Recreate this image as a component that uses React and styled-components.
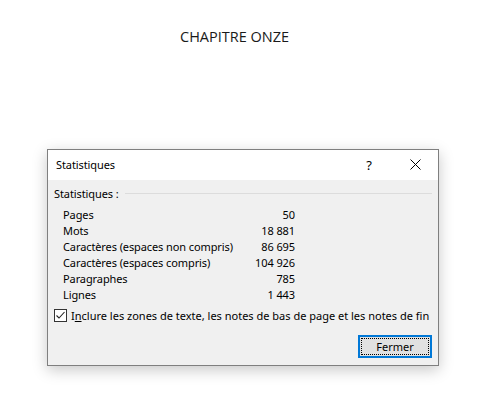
import React from "react";
import styled, { createGlobalStyle } from "styled-components";

const Global = createGlobalStyle`
  html, body { margin: 0; padding: 0; background: #ffffff; }
  body { font-family: "Noto Sans", "Open Sans", sans-serif; }
`;

const Page = styled.div`
  width: 487px;
  height: 404px;
  display: flex;
  flex-direction: column;
  padding-top: 28px;
  box-sizing: border-box;
`;

const Heading = styled.h1`
  margin: 0 0 0 180px;
  font-family: "Open Sans", "Noto Sans", sans-serif;
  font-weight: 400;
  font-size: 14.5px;
  line-height: 18px;
  color: #1a1a1a;
`;

const Dialog = styled.div`
  margin: 103px 0 0 47px;
  width: 392px;
  height: 217px;
  box-sizing: border-box;
  border: 1px solid #7f7f7f;
  background: #f0f0f0;
  box-shadow: 0 4px 14px rgba(0, 0, 0, 0.22);
  display: flex;
  flex-direction: column;
  font-family: "Noto Sans", sans-serif;
  font-size: 11px;
  letter-spacing: -0.1px;
  color: #000;
`;

const TitleBar = styled.div`
  height: 30px;
  background: #ffffff;
  display: flex;
  align-items: center;
  padding-left: 8px;
  padding-bottom: 1px;
  box-sizing: border-box;
`;

const Title = styled.span`
  flex: 1;
  font-size: 11px;
`;

const TitleButton = styled.button`
  width: 46px;
  height: 29px;
  border: 0;
  background: transparent;
  display: flex;
  align-items: center;
  justify-content: center;
  padding: 0;
  font-family: "Noto Sans", sans-serif;
  font-size: 13px;
  color: #000;
`;

const Body = styled.div`
  flex: 1;
  display: flex;
  flex-direction: column;
  padding: 5px 6px 0 6px;
`;

const GroupHeader = styled.div`
  display: flex;
  align-items: center;
  gap: 6px;
  height: 16px;
  &::after {
    content: "";
    flex: 1;
    height: 1px;
    background: #dcdcdc;
  }
`;

const StatsGrid = styled.div`
  display: grid;
  grid-template-columns: 1fr auto;
  width: 232px;
  margin: 5px 0 0 9px;
  grid-auto-rows: 16px;
  align-items: center;
`;

const Label = styled.span``;

const Value = styled.span`
  text-align: right;
`;

const CheckRow = styled.label`
  display: flex;
  align-items: center;
  gap: 4px;
  margin-top: 5px;
  height: 16px;
  white-space: nowrap;
  letter-spacing: 0;
`;

const Box = styled.span`
  width: 13px;
  height: 13px;
  flex: none;
  box-sizing: border-box;
  border: 1px solid #333;
  background: #fff;
  display: flex;
  align-items: center;
  justify-content: center;
`;

const Underline = styled.span`
  text-decoration: underline;
`;

const Footer = styled.div`
  display: flex;
  justify-content: flex-end;
  margin-top: 12px;
`;

const Button = styled.button`
  width: 74px;
  height: 23px;
  box-sizing: border-box;
  border: 2px solid #0078d7;
  background: #e1e1e1;
  padding: 1px;
  font-family: "Noto Sans", sans-serif;
  font-size: 11px;
  color: #000;
  display: flex;
`;

const FocusRing = styled.span`
  flex: 1;
  border: 1px dotted #000;
  display: flex;
  align-items: center;
  justify-content: center;
`;

const stats = [
  ["Pages", "50"],
  ["Mots", "18 881"],
  ["Caractères (espaces non compris)", "86 695"],
  ["Caractères (espaces compris)", "104 926"],
  ["Paragraphes", "785"],
  ["Lignes", "1 443"],
];

export default function App() {
  return (
    <>
      <Global />
      <Page>
        <Heading>CHAPITRE ONZE</Heading>
        <Dialog>
          <TitleBar>
            <Title>Statistiques</Title>
            <TitleButton>?</TitleButton>
            <TitleButton>
              <svg width="11" height="11" viewBox="0 0 11 11">
                <path d="M0.5 0.5 L10.5 10.5 M10.5 0.5 L0.5 10.5" stroke="#000" strokeWidth="1" />
              </svg>
            </TitleButton>
          </TitleBar>
          <Body>
            <GroupHeader>Statistiques :</GroupHeader>
            <StatsGrid>
              {stats.map(([k, v]) => (
                <React.Fragment key={k}>
                  <Label>{k}</Label>
                  <Value>{v}</Value>
                </React.Fragment>
              ))}
            </StatsGrid>
            <CheckRow>
              <Box>
                <svg width="11" height="11" viewBox="0 0 11 11">
                  <path d="M1.5 5.5 L4 8 L9.5 2" fill="none" stroke="#222" strokeWidth="1.1" />
                </svg>
              </Box>
              <span>
                I<Underline>n</Underline>clure les zones de texte, les notes de bas de page et les notes de fin
              </span>
            </CheckRow>
            <Footer>
              <Button>
                <FocusRing>Fermer</FocusRing>
              </Button>
            </Footer>
          </Body>
        </Dialog>
      </Page>
    </>
  );
}
